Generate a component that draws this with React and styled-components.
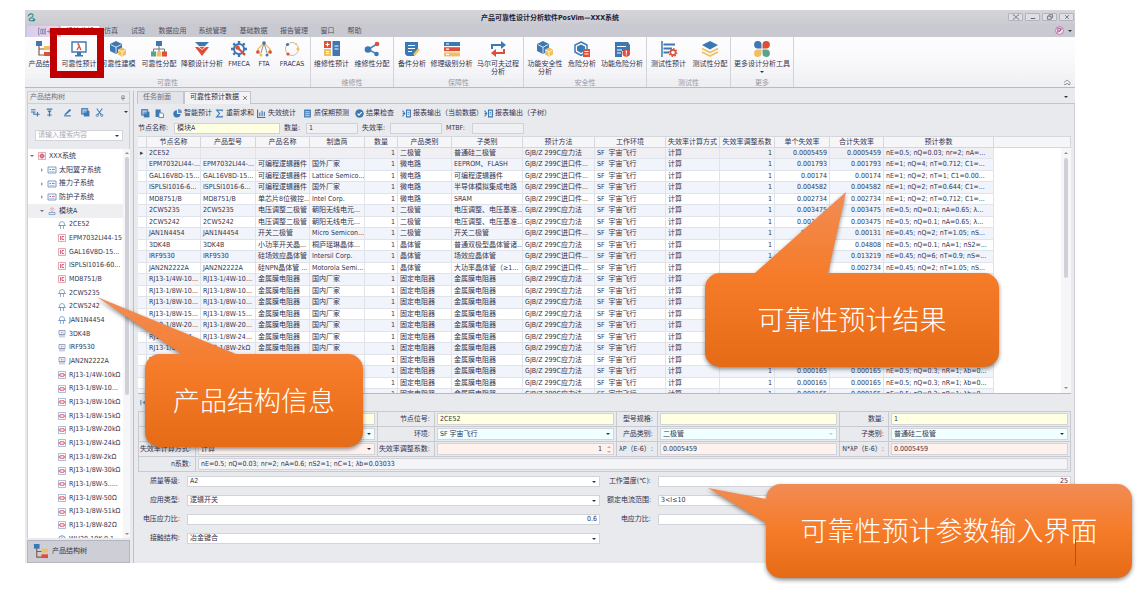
import React, { useState } from 'react';
import styled, { createGlobalStyle, css } from 'styled-components';

const GlobalStyle = createGlobalStyle`
  * {
    box-sizing: border-box;
  }

  body {
    margin: 0;
    background: #fff;
    color: #33334d;
    font-family: 'DejaVu Sans Condensed', 'Noto Sans', 'Noto Sans CJK SC', sans-serif;
    font-size: 7px;
    line-height: 11px;
  }

  button, input, select {
    margin: 0;
    padding: 0;
    border: 0;
    border-radius: 0;
    background: none;
    color: inherit;
    font: inherit;
    outline: none;
  }

  ul {
    margin: 0;
    padding: 0;
    list-style: none;
  }
`;

const Stage = styled.div`
  position: relative;
  padding: 10px 63px 36px 25px;
`;

const AppWindow = styled.div`
  background: #e9eaee;
`;

/* ---------- title and menu ---------- */

const TitleBar = styled.header`
  display: flex;
  align-items: center;
  height: 14px;
  padding: 0 1px 0 2px;
  background: linear-gradient(#d6d6da, #cbcbd2);
`;

const TitleText = styled.h1`
  flex: 1;
  margin: 0;
  padding: 2px 0 0 56px;
  color: #1d1d33;
  font-size: 7px;
  font-weight: 700;
  text-align: center;
`;

const WindowButtons = styled.div`
  display: flex;
  gap: 2px;
`;

const WindowButton = styled.button`
  display: flex;
  align-items: center;
  justify-content: center;
  width: 15px;
  height: 8px;
  border: 1px solid #b4b4be;
  border-radius: 1px;
  background: #dfdfe4;
`;

const MenuBar = styled.nav`
  display: flex;
  align-items: flex-end;
  height: 13px;
  padding-left: 2px;
  background: #c9c9d1;
`;

const FileButton = styled.button`
  display: flex;
  align-items: center;
  justify-content: center;
  width: 31px;
  height: 11px;
  margin-right: 3px;
  background: linear-gradient(90deg, #d9cdee, #ecd4ec);
`;

const MenuItem = styled.a`
  flex: none;
  width: ${props => props.$width}px;
  height: 11px;
  background: ${props => (props.$active ? '#fcfcfe' : 'transparent')};
  color: #50505f;
  text-align: center;
  text-decoration: none;
  white-space: nowrap;
`;

const MenuEnd = styled.div`
  display: flex;
  align-items: center;
  gap: 4px;
  height: 13px;
  margin-left: auto;
  padding-right: 3px;
`;

/* ---------- ribbon ---------- */

const Ribbon = styled.section`
  display: flex;
  height: 51px;
  border-bottom: 1px solid #b9bac1;
  background: linear-gradient(#fdfdfe, #fafafc 40%, #eeeff3);
`;

const RibbonGroup = styled.div`
  display: flex;
  flex: none;
  flex-direction: column;
  justify-content: space-between;
  width: ${props => props.$width}px;
  border-right: 1px solid #d2d3d9;
`;

const RibbonItems = styled.div`
  display: flex;
  padding-top: 4px;
`;

const RibbonButton = styled.button`
  display: flex;
  flex: none;
  flex-direction: column;
  align-items: center;
  gap: 3px;
  width: ${props => props.$width}px;
  line-height: 8px;
  white-space: pre;
  cursor: pointer;
`;

const GroupTitle = styled.div`
  height: 8px;
  background: rgba(236, 237, 241, 0.6);
  color: #9a9aa4;
  line-height: 8px;
  text-align: center;
`;

const RibbonEnd = styled.div`
  display: flex;
  flex: 1;
  align-items: flex-end;
  justify-content: flex-end;
  padding: 0 4px 1px 0;
`;

const Caret = styled.span`
  flex: none;
  width: 0;
  height: 0;
  border: 2px solid transparent;
  border-top-color: ${props => props.$color || '#33333f'};
  border-bottom: 0;
`;

const UpCaret = styled.span`
  flex: none;
  width: 0;
  height: 0;
  border: 2px solid transparent;
  border-top: 0;
  border-bottom-color: ${props => props.$color || '#8c8c98'};
`;

/* ---------- side panel ---------- */

const Workspace = styled.div`
  display: flex;
  padding-top: 3px;
`;

const SidePanel = styled.aside`
  display: flex;
  flex: none;
  flex-direction: column;
  width: 109px;
  padding: 0 3px 0 2px;
  border-right: 1px solid #bfc0c9;
`;

const SideHeader = styled.div`
  display: flex;
  align-items: center;
  justify-content: space-between;
  height: 13px;
  padding: 0 3px 0 2px;
  border: 1px solid #cfd0d6;
  color: #70707e;
`;

const SideTools = styled.div`
  display: flex;
  align-items: center;
  gap: 5px;
  height: 18px;
  padding: 0 1px 2px 3px;
  border: solid #cfd0d6;
  border-width: 0 1px;
`;

const ToolButton = styled.button`
  display: flex;
  align-items: center;
  gap: 2px;
  margin-left: ${props => props.$gap || 0}px;
  white-space: nowrap;
  cursor: pointer;
`;

const SearchArea = styled.div`
  display: flex;
  height: 27px;
  padding: 8px 6px 8px 7px;
  border: solid #cfd0d6;
  border-width: 0 1px;
`;

const SearchBox = styled.div`
  display: flex;
  flex: 1;
  align-items: center;
  padding: 0 3px 0 2px;
  border: 1px solid #d2d4da;
  background: #fff;
`;

const SearchInput = styled.input`
  flex: 1;
  width: 0;
  height: 9px;

  &::placeholder {
    color: #a9a9b2;
  }
`;

const TreeArea = styled.div`
  display: flex;
  flex: 1 1 0px;
  min-height: 0;
  overflow: hidden;
  border-left: 1px solid #cfd0d6;
  background: #fff;
`;

const Tree = styled.ul`
  flex: 1;
  width: 0;
`;

const TreeRow = styled.li`
  display: flex;
  align-items: center;
  gap: 3px;
  height: 14px;
  padding-left: ${props => props.$level * 10 + 2}px;
  background: ${props => (props.$selected ? '#efeff2' : 'transparent')};
  white-space: nowrap;

  &:nth-child(3n) {
    height: 13px;
  }
`;

const Expander = styled.span`
  flex: none;
  width: 4px;
  height: 4px;
  margin-right: 1px;
  border: 2px solid transparent;
  ${props => props.$state === 'open' && css`
    border-top-color: #6f6f7c;
    transform: translateY(1px);
  `}
  ${props => props.$state === 'closed' && css`
    border-left-color: #9a9aa5;
    transform: translateX(1px);
  `}
`;

const TreeScroll = styled.div`
  display: flex;
  flex: none;
  flex-direction: column;
  align-items: center;
  gap: 3px;
  width: 7px;
  padding: 3px 0 3px;
  background: #f6f6f9;
`;

const Thumb = styled.div`
  flex: none;
  width: 4px;
  height: ${props => props.$size}px;
  margin-bottom: auto;
  border-radius: 2px;
  background: #cfd0d8;
`;

const SideFooter = styled.button`
  display: flex;
  align-items: center;
  gap: 4px;
  height: 23px;
  margin-top: 2px;
  padding: 0 5px;
  border: 1px solid #b5b6bf;
  background: #cdced6;
`;

/* ---------- main area ---------- */

const Main = styled.main`
  flex: 1;
  min-width: 0;
  padding-left: 3px;
`;

const DocTabs = styled.div`
  display: flex;
  align-items: center;
  height: 13px;
  border-bottom: 1px solid #c4c5cc;
`;

const DocTab = styled.button`
  display: flex;
  align-items: center;
  gap: 3px;
  height: 13px;
  padding: 0 ${props => (props.$active ? 2 : 12)}px 0 5px;
  border: solid #c4c5cc;
  border-width: 1px 1px 0;
  background: ${props => (props.$active ? '#f3f3f6' : '#e3e4e9')};
  color: ${props => (props.$active ? '#2a2a44' : '#6c6c7a')};
`;

const BarEnd = styled.span`
  display: flex;
  margin-left: auto;
  padding-right: ${props => props.$inset || 0}px;
`;

const MainBody = styled.div`
  padding: 0 3px 0 1px;
  border-right: 1px solid #cccdd5;
`;

const Toolbar = styled.div`
  display: flex;
  align-items: center;
  height: 18px;
  padding-left: 3px;
`;

const FilterBar = styled.div`
  display: flex;
  align-items: center;
  gap: 4px;
  height: 14px;
  padding-bottom: 2px;
`;

const FilterLabel = styled.label`
  flex: none;
  min-width: ${props => props.$width}px;
`;

const FilterInput = styled.input`
  width: ${props => props.$width}px;
  height: 11px;
  padding: 0 2px;
  border: 1px solid #d0d1d8;
  background: ${props => (props.$yellow ? '#ffffe1' : '#eff0f3')};
`;

const GridFrame = styled.div`
  position: relative;
  height: 258px;
  overflow: hidden;
  border-bottom: 1px solid #b6b9c8;
  background: #fff;
`;

const DataTable = styled.table`
  width: 100%;
  border-collapse: separate;
  border-spacing: 0;
  table-layout: fixed;
`;

const Th = styled.th`
  height: 12px;
  padding: 0;
  overflow: hidden;
  border: solid #d6d7dd;
  border-width: 1px 1px 1px 0;
  background: #f6f6f9;
  font-weight: 400;
  line-height: 10px;
  white-space: nowrap;
`;

const Tr = styled.tr`
  background: #fff;
  line-height: 10px;

  &:nth-child(even) {
    background: #f1f4fa;
    line-height: 11px;
  }

  &:first-child {
    background: #f0f0f4;
  }
`;

const Td = styled.td`
  padding: 0 ${props => (props.$right ? 2 : 0)}px 0 2px;
  overflow: hidden;
  border: solid #e0e3ea;
  border-width: 0 1px 1px 0;
  text-align: ${props => (props.$right ? 'right' : 'left')};
  white-space: nowrap;
`;

const FillTd = styled.td`
  padding: 0;
  background: #fff;
`;

const GridScroll = styled.div`
  position: absolute;
  top: 12px;
  right: 0;
  bottom: 0;
  display: flex;
  flex-direction: column;
  align-items: center;
  gap: 4px;
  width: 10px;
  padding: 4px 0;
  background: #f6f6f9;
`;

const Navigator = styled.div`
  display: flex;
  align-items: center;
  height: 17px;
  padding-left: 2px;
`;

const Form = styled.form`
  display: grid;
  grid-template-columns: 57px 1fr 57px 1fr 41px 1fr 49px 1fr;
  border: solid #c9cad1;
  border-width: 1px 0 0 1px;
`;

const FormLabel = styled.label`
  height: 15px;
  padding-right: 4px;
  border: solid #c9cad1;
  border-width: 0 1px 1px 0;
  line-height: 14px;
  text-align: right;
  white-space: nowrap;
`;

const FormCell = styled.div`
  display: flex;
  grid-column: span ${props => props.$span || 1};
  min-width: 0;
  padding: 1px 2px;
  border: solid #c9cad1;
  border-width: 0 1px 1px 0;
`;

const tones = {
  yellow: '#ffffe1',
  cyan: '#f0ffff',
  pink: '#fff1ec',
  grey: '#f4f4f6',
  white: '#fff',
};

const Field = styled.div`
  display: flex;
  flex: 1;
  align-items: center;
  min-width: 0;
  height: ${props => (props.$tone === 'white' ? 11 : 12)}px;
  padding-right: ${props => (props.$right ? 0 : 3)}px;
  border: 1px solid #d3d4da;
  background: ${props => tones[props.$tone]};

  input, select {
    flex: 1;
    width: 0;
    height: 9px;
    padding: 0 2px;
    line-height: 9px;
    text-align: ${props => (props.$right ? 'right' : 'left')};
    appearance: none;
  }

  select:disabled {
    opacity: 1;
  }
`;

const Spinner = styled.span`
  display: flex;
  flex-direction: column;
  gap: 3px;
  padding: 0 2px 0 3px;
`;

const Params = styled.form`
  display: grid;
  grid-template-columns: 42px 1fr 44px 1fr;
  gap: 8px 7px;
  padding: 4px 0 19px;
`;

const ParamLabel = styled.label`
  text-align: right;
  white-space: nowrap;
`;

/* ---------- annotations ---------- */

const Highlight = styled.div`
  position: absolute;
  top: 28px;
  left: 50px;
  width: 54px;
  height: 50px;
  border: 7px solid #c00000;
`;

const Callout = styled.div`
  position: absolute;
  top: ${props => props.$y}px;
  left: ${props => props.$x}px;
  display: flex;
  align-items: center;
  justify-content: center;
  width: ${props => props.$w}px;
  height: ${props => props.$h}px;
  padding-bottom: 2px;
  color: #fff;
  font-family: 'Noto Sans CJK SC', sans-serif;
  font-size: 27px;
  font-weight: 300;
  line-height: 40px;
  white-space: nowrap;

  svg {
    position: absolute;
    top: 0;
    left: 0;
    overflow: visible;
    filter: drop-shadow(0 2px 2px rgba(60, 60, 60, 0.6));
  }

  span {
    position: relative;
  }
`;

const TextCursor = styled.span`
  position: absolute;
  top: 539px;
  left: 1075px;
  width: 1px;
  height: 27px;
  background: #4a6f93;
`;

const BLUE = '#3c78b4';
const RED = '#dc4f38';
const SAND = '#f0c060';
const GREEN = '#58a58c';

const art = {
  structure: <><path d="M4 3v11h6M4 8h7" fill="none" stroke="#8a5a3c" strokeWidth="1.2" /><path fill={BLUE} d="M1 0h6v5H1z" /><path fill={SAND} d="M9 5h7v4H9z" /><path fill={RED} d="M9 11h7v4H9z" /></>,
  predict: <><path fill="#fff" stroke={BLUE} strokeWidth="1.4" d="M1 1h14v10H1z" /><path fill={BLUE} d="M6 11h4v3H6zM4 14h8v1.4H4z" /><path d="M6.3 3h1.2l2.3 6M8 5.5L6 9" fill="none" stroke={RED} strokeWidth="1.3" /></>,
  cubes: <><path fill={BLUE} d="M6 0l6 3v7l-6 3-6-3V3z" /><path d="M.8 3.6L6 6.2l5.2-2.6M6 6v6.5" fill="none" stroke="#fff" strokeWidth=".8" /><path fill={SAND} d="M12 6.5l4 2v5l-4 2.3-4-2.3v-5z" /><path d="M8.5 9l3.5 1.8L15.5 9M12 11v4.3" fill="none" stroke="#fff" strokeWidth=".7" /></>,
  allocate: <><path d="M8 5v3M2.5 11V8h11v3M8 8v3" fill="none" stroke="#777" strokeWidth="1" /><path fill={BLUE} d="M5 0h6v5H5z" /><path fill={GREEN} d="M0 10.5h5v5H0z" /><path fill={SAND} d="M5.7 10.5h4.6v5H5.7z" /><path fill={RED} d="M11 10.5h5v5h-5z" /></>,
  derate: <><path fill={BLUE} d="M1 1h14l-4 4H5z" /><path fill={RED} d="M1 6h3l4 3 4-3h3l-7 9z" /><path fill={RED} d="M5 5.800h6L8 8.200z" /></>,
  gear: <><circle cx="8" cy="8" r="5" fill="none" stroke={BLUE} strokeWidth="2" /><path d="M8 0v3M8 13v3M0 8h3M13 8h3M2.300 2.300l2.200 2.200M11.500 11.500l2.200 2.200M2.300 13.700l2.200-2.200M11.500 4.500l2.200-2.200" stroke={BLUE} strokeWidth="2.400" /><path d="M6 6l8 8" stroke={RED} strokeWidth="2.200" /><circle cx="6.500" cy="6.500" r="2.200" fill={RED} /></>,
  fta: <><path d="M8 2L2 8l2 5M8 2l6 6-2 5M2 8l-1 5M14 8l1 5" fill="none" stroke={SAND} strokeWidth="1.200" /><path d="M8 2L5 12M8 2l3 10" fill="none" stroke="#777" strokeWidth=".8" /><circle cx="8" cy="2" r="1.800" fill={BLUE} /><circle cx="1.800" cy="11" r="1.700" fill={RED} /><circle cx="5" cy="14" r="1.500" fill={SAND} /><circle cx="11" cy="14" r="1.500" fill={BLUE} /><circle cx="14.200" cy="11" r="1.700" fill={RED} /></>,
  fracas: <><circle cx="8" cy="8" r="6.5" fill="none" stroke="#d9b899" strokeWidth="1" /><circle cx="3.5" cy="3.5" r="1.600" fill={BLUE} /><circle cx="14" cy="8" r="1.600" fill={SAND} /><circle cx="4" cy="13" r="1.600" fill={RED} /><circle cx="12" cy="3" r="1.100" fill={SAND} /></>,
  repair: <><path fill={RED} d="M0 0h7v7H0z" /><path d="M3.5 1.5v4M1.5 3.5h4" stroke="#fff" strokeWidth="1.200" /><path fill={SAND} d="M0 8h7v7H0z" /><path fill={BLUE} d="M8.5 0H16v15H8.5z" /><path d="M2 10.5h3M2 12.5h3M10.5 5h4M10.5 8h4" stroke="#fff" strokeWidth="1" /></>,
  share: <><path d="M13 3L4 8.5l8 4" fill="none" stroke="#4e84bb" strokeWidth="1.500" /><circle cx="4" cy="8.500" r="3.300" fill={BLUE} /><circle cx="13" cy="3" r="2.300" fill={RED} /><circle cx="12.500" cy="13" r="2.300" fill={BLUE} /></>,
  note: <><path fill={BLUE} d="M1 1h13v9l-4 5H3l-2-2z" /><path d="M4 4.5h7M4 7.5h7M4 10.5h4" stroke="#fff" strokeWidth="1.200" /><path d="M15 8l-5 6" stroke={SAND} strokeWidth="2.400" /></>,
  levels: <><path fill={BLUE} d="M0 1h16v4H0z" /><path fill={RED} d="M0 6.2h16v4H0z" /><path fill={SAND} d="M0 11.400h16v4H0z" /><path d="M2 3h3M2 8.2h3M2 13.4h3" stroke="#fff" strokeWidth="1.200" /></>,
  loop: <><path d="M2 8V4h10" fill="none" stroke={BLUE} strokeWidth="2" /><path fill={BLUE} d="M11 0l5 4-5 4z" /><path d="M14 8v4H5" fill="none" stroke={RED} strokeWidth="2" /><path fill={RED} d="M6 8l-5 4 5 4z" /></>,
  hazard: <><path fill="none" stroke={BLUE} strokeWidth="1.500" d="M7 1l6 3v7l-6 3.500L1 11V4z" /><path fill={BLUE} d="M7 3.500l4 2v4l-4 2.500-4-2.500v-4z" /><path fill={RED} d="M9 8h7v8H9z" /><path d="M10.500 10.500h4M10.500 13h4" stroke="#fff" strokeWidth="1" /></>,
  funcHazard: <><path fill={BLUE} d="M1 1h13l2 3v6H8v6H1z" /><path d="M3 5.500h9M3 9h5M3 12h4" stroke="#fff" strokeWidth="1.200" /><circle cx="12.300" cy="12" r="3.800" fill={RED} /><path d="M12.300 9.500v3M12.300 13.300v1" stroke="#fff" strokeWidth="1.200" /></>,
  testPredict: <><path d="M1 0v16" stroke={BLUE} strokeWidth="1.500" /><path d="M2.500 3.500H14M2.500 7.500H11M2.500 11.500H8" stroke={BLUE} strokeWidth="2.200" /><circle cx="12" cy="11.500" r="2.600" fill="#fff" stroke={RED} strokeWidth="1.600" /><circle cx="12" cy="11.500" r="3.900" fill="none" stroke={RED} strokeWidth="1.200" strokeDasharray="1.500 1.500" /></>,
  layers: <><path fill={BLUE} d="M8 0l8 4-8 4.500L0 4z" /><path d="M0 7.500l8 4 8-4M0 11l8 4 8-4" fill="none" stroke={SAND} strokeWidth="1.700" /></>,
  petals: <><path fill={BLUE} d="M7.500 7.500H4A3.700 3.700 0 1 1 7.500 4z" /><path fill={RED} d="M8.500 7.500V4A3.700 3.700 0 1 1 12 7.500z" /><path fill={SAND} d="M7.500 8.500V12A3.700 3.700 0 1 1 4 8.500z" /><path fill={GREEN} d="M8.500 8.500H12A3.700 3.700 0 1 1 8.500 12z" /></>,
  addRow: <path d="M0 3h8M0 7h8M11.500 7v8M8 11h7.500M5 7v4h3" fill="none" stroke={BLUE} strokeWidth="2" />,
  addChild: <><path d="M3 2h10M8 4v11M4 12.500h8" stroke={BLUE} strokeWidth="2" /><path fill={BLUE} d="M4 5h8l-4 4z" /></>,
  edit: <><path d="M2 14h12" stroke={BLUE} strokeWidth="2" /><path d="M12 2l-8 8-1 2 3-1 8-7z" fill={BLUE} stroke={BLUE} /></>,
  copy: <><path fill="#7fa6cf" stroke={BLUE} strokeWidth="1.500" d="M1 1h11v10H1z" /><path fill={BLUE} d="M5 5h10v10H5z" /><path d="M3 4h7M3 7h7" stroke="#fff" /></>,
  paste: <><path fill={BLUE} d="M1 1h9v5H7v8H1z" /><path fill="#fff" stroke={BLUE} strokeWidth="1.500" d="M7 7h6l2 2v6H7z" /></>,
  cut: <><path d="M3 1l8 11M13 1L5 12" stroke={BLUE} strokeWidth="1.800" /><circle cx="4" cy="13" r="2" fill="none" stroke={BLUE} strokeWidth="1.500" /><circle cx="12" cy="13" r="2" fill="none" stroke={BLUE} strokeWidth="1.500" /></>,
  smart: <><path fill={BLUE} d="M7 2a6.500 6.500 0 1 0 6.500 7H7z" /><path fill="#5f95cc" d="M9 0a7 7 0 0 1 7 7H9z" /></>,
  sigma: <path d="M13 4V2H3l5 6-5 6h10v-2" fill="none" stroke={BLUE} strokeWidth="2" />,
  bars: <path d="M1 1v14h14M5 13V6M9 13V3M13 13V5" fill="none" stroke={BLUE} strokeWidth="2" />,
  sheet: <><path fill={BLUE} d="M2 1h12v14H2z" /><path d="M4 5h8M4 8.500h8M4 12h8" stroke="#fff" strokeWidth="1.400" /></>,
  check: <><circle cx="8" cy="8" r="7.500" fill={BLUE} /><path d="M4.500 8l2.500 3 5-5.500" fill="none" stroke="#fff" strokeWidth="2" /></>,
  report: <><path d="M1 3l4 5-4 5M5 8H1" fill="none" stroke={BLUE} strokeWidth="1.800" /><path d="M8 2h7v12H8z" fill="none" stroke={BLUE} strokeWidth="1.800" /><path d="M10 6h3M10 9h3" stroke={BLUE} strokeWidth="1.400" /></>,
  system: <><path fill="#fdf0f3" stroke="#d77" strokeWidth="1.200" d="M1 1h14v14H1z" /><path fill="none" stroke="#c8416a" strokeWidth="1.400" d="M8 2v12M2 8h12M5 5h6v6H5z" /></>,
  subsystem: <><path fill="#f6fafe" stroke="#5f8bc0" strokeWidth="1.600" d="M0 2h16v12H0z" /><path d="M3 7h3M8 7h5" stroke="#b8557e" strokeWidth="1.800" /><path d="M3 11h10" stroke="#9cb8d8" strokeWidth="1.400" /></>,
  module: <><path d="M2 11h12v4H2zM8 11V8" fill="none" stroke="#6c94c4" strokeWidth="1.500" /><path d="M4 5c2-4 7-4 9 0M6 7c1-2 4-2 5 0" fill="none" stroke="#d57c8e" strokeWidth="1.400" /></>,
  diode: <path d="M3 9V6a5 5 0 0 1 10 0v3zM0 9h16M5 9v7M11 9v7" fill="none" stroke="#6c94c4" strokeWidth="1.500" />,
  chip: <><path fill="#fff5f6" stroke="#cf7f92" strokeWidth="1.300" d="M1 1h14v14H1z" /><path d="M5 4v8M12 5H8v6h4" fill="none" stroke="#cc3a5e" strokeWidth="1.500" /></>,
  transistor: <><path d="M2 1h12v8H2zM4 9v6M8 9v6M12 9v6" fill="none" stroke="#6c7fae" strokeWidth="1.400" /><path d="M5 4h2v3M10 3v4" fill="none" stroke="#b8557e" strokeWidth="1.200" /></>,
  resistor: <><path fill="#fff" stroke="#7d9ac4" strokeWidth="1.300" d="M1 1h14v14H1z" /><path d="M1 8h3M12 8h3M4 5.500h8v5H4z" fill="none" stroke="#d43e5e" strokeWidth="1.600" /></>,
  pot: <><circle cx="8" cy="8" r="6.500" fill="#fff" stroke={BLUE} strokeWidth="1.500" /><path d="M3 8h10M8 4v8" stroke={BLUE} strokeWidth="1.500" /></>,
  first: <><path d="M2 2v12" stroke="#6f8db4" strokeWidth="2.500" /><path fill="#6f8db4" d="M14 2v12L5 8z" /></>,
  logo: <path d="M2 6c1-5 8-6 9-2s-6 4-7 7 4 4 9 1M10 9l4 3-3 3" fill="none" stroke="#2b8d92" strokeWidth="2" />,
  pin: <path d="M5 2h6v7H5zM3 9h10M8 9v6" fill="none" stroke="#77778a" strokeWidth="1.800" />,
  close: <path d="M3 3l10 10M13 3L3 13" stroke="#5b5b6b" strokeWidth="2" />,
  minimize: <path d="M2 12h12" stroke="#5b5b6b" strokeWidth="2.500" />,
  restore: <path d="M5 5V2h10v8h-4M1 6h10v8H1z" fill="none" stroke="#5b5b6b" strokeWidth="2" />,
  expand: <path d="M2 2l4 4M14 2l-4 4M2 14l4-4M14 14l-4-4M1 5V1M15 5V1M1 11v4M15 11v4M6 6h4v4H6z" fill="none" stroke="#5b5b6b" strokeWidth="1.500" />,
  skin: <><circle cx="8" cy="8" r="7" fill="#f7e6f1" stroke="#b36a9c" strokeWidth="1.500" /><path d="M5 12V4h4l2 2-2 3H6M11 4l-3 6" fill="none" stroke="#8a3f78" strokeWidth="1.500" /></>,
  collapse: <path d="M2 9l6-5 6 5M2 13h4l2-3 2 3h4V9" fill="none" stroke="#7b7b88" strokeWidth="1.500" />,
  fileMenu: <path d="M3 2H1v12h2M5 4h6v8H5zM8 4v8M13 2v12M16 8h8M20 4v8" fill="none" stroke="#8080a0" strokeWidth="1.500" />,
};

const Icon = ({ name, size = 8 }) => (
  <svg width={size} height={size} viewBox="0 0 16 16" overflow="visible" aria-hidden="true">
    {art[name]}
  </svg>
);

const menus = [
  ['仿真', 24], ['试验', 30], ['数据应用', 39], ['系统管理', 41],
  ['基础数据', 41], ['报告管理', 40], ['窗口', 27], ['帮助', 27],
];

const ribbon = [
  { title: '可靠性', width: 286, items: [
    ['structure', '产品结构', 35], ['predict', '可靠性预计', 38], ['cubes', '可靠性建模', 40],
    ['allocate', '可靠性分配', 42], ['derate', '降额设计分析', 44], ['gear', 'FMECA', 30],
    ['fta', 'FTA', 20], ['fracas', 'FRACAS', 36],
  ] },
  { title: '维修性', width: 83, items: [['repair', '维修性预计', 41], ['share', '维修性分配', 40]] },
  { title: '保障性', width: 130, items: [['note', '备件分析', 36], ['levels', '修理级别分析', 43], ['loop', '马尔可夫过程\n分析', 50]] },
  { title: '安全性', width: 123, items: [['cubes', '功能安全性\n分析', 42], ['hazard', '危险分析', 32], ['funcHazard', '功能危险分析', 48]] },
  { title: '测试性', width: 84, items: [['testPredict', '测试性预计', 43], ['layers', '测试性分配', 40]] },
  { title: '更多', width: 63, items: [['petals', '更多设计分析工具', 62]] },
];

const treeItems = [
  [0, 'system', 'XXX系统', 'open'],
  [1, 'subsystem', '太阳翼子系统', 'closed'],
  [1, 'subsystem', '推力子系统', 'closed'],
  [1, 'subsystem', '防护子系统', 'closed'],
  [1, 'module', '模块A', 'open'],
  [2, 'diode', '2CE52'],
  [2, 'chip', 'EPM7032LI44-15'],
  [2, 'chip', 'GAL16V8D-15...'],
  [2, 'chip', 'ISPLSI1016-60...'],
  [2, 'chip', 'MD8751/B'],
  [2, 'diode', '2CW5235'],
  [2, 'diode', '2CW5242'],
  [2, 'diode', 'JAN1N4454'],
  [2, 'transistor', '3DK4B'],
  [2, 'transistor', 'IRF9530'],
  [2, 'transistor', 'JAN2N2222A'],
  [2, 'resistor', 'RJ13-1/4W-10kΩ'],
  [2, 'resistor', 'RJ13-1/8W-10...'],
  [2, 'resistor', 'RJ13-1/8W-10kΩ'],
  [2, 'resistor', 'RJ13-1/8W-15kΩ'],
  [2, 'resistor', 'RJ13-1/8W-20kΩ'],
  [2, 'resistor', 'RJ13-1/8W-24kΩ'],
  [2, 'resistor', 'RJ13-1/8W-2kΩ'],
  [2, 'resistor', 'RJ13-1/8W-30kΩ'],
  [2, 'resistor', 'RJ13-1/8W-5.....'],
  [2, 'resistor', 'RJ13-1/8W-50Ω'],
  [2, 'resistor', 'RJ13-1/8W-51kΩ'],
  [2, 'resistor', 'RJ13-1/8W-82Ω'],
  [2, 'pot', 'WH20-10K-0.1...'],
];

const tools = [
  ['copy', '', 0], ['paste', '', 5], ['smart', '智能预计', 9], ['sigma', '重新求和', 3],
  ['bars', '失效统计', 3], ['sheet', '质保期预测', 7], ['check', '结果检查', 6],
  ['report', '报表输出（当前数据）', 8], ['report', '报表输出（子树）', 1],
];

const columns = [
  ['', 9], ['节点名称', 54], ['产品型号', 55], ['产品名称', 54], ['制造商', 55], ['数量', 33],
  ['产品类别', 54], ['子类别', 71], ['预计方法', 72], ['工作环境', 71], ['失效率计算方式', 54],
  ['失效率调整系数', 55], ['单个失效率', 55], ['合计失效率', 54], ['预计参数', 110],
];

const stress = 'GJB/Z 299C应力法';
const imported = 'GJB/Z 299C进口件...';

const resistor = name => [name, name, '金属膜电阻器', '国内厂家', '固定电阻器', '金属膜电阻器', stress, '0.000165', 'nE=0.5; nQ=0.3; nR=1; λb=0...'];

const rows = [
  ['2CE52', '', '', '', '二极管', '普通硅二极管', stress, '0.0005459', 'nE=0.5; nQ=0.03; nr=2; nA=...'],
  ['EPM7032LI44-...', 'EPM7032LI44-...', '可编程逻辑器件', '国外厂家', '微电路', 'EEPROM、FLASH', imported, '0.001793', 'nE=1; nQ=4; nT=0.712; C1=...'],
  ['GAL16V8D-15...', 'GAL16V8D-15...', '可编程逻辑器件', 'Lattice Semico...', '微电路', '可编程逻辑器件', imported, '0.00174', 'nE=1; nQ=2; nT=1; C1=0.00...'],
  ['ISPLSI1016-6...', 'ISPLSI1016-6...', '可编程逻辑器件', '国外厂家', '微电路', '半导体模拟集成电路', imported, '0.004582', 'nE=1; nQ=2; nT=0.644; C1=...'],
  ['MD8751/B', 'MD8751/B', '单芯片8位微控...', 'Intel Corp.', '微电路', 'SRAM', imported, '0.002734', 'nE=1; nQ=2; nT=0.712; C1=...'],
  ['2CW5235', '2CW5235', '电压调整二极管', '朝阳无线电元...', '二极管', '电压调整、电压基准...', stress, '0.003475', 'nE=0.5; nQ=0.1; nA=0.65; λ...'],
  ['2CW5242', '2CW5242', '电压调整二极管', '朝阳无线电元...', '二极管', '电压调整、电压基准...', stress, '0.003475', 'nE=0.5; nQ=0.1; nA=0.65; λ...'],
  ['JAN1N4454', 'JAN1N4454', '开关二极管', 'Micro Semicon...', '二极管', '开关二极管', imported, '0.00131', 'nE=0.45; nQ=2; nT=1.05; nS...'],
  ['3DK4B', '3DK4B', '小功率开关晶...', '桐庐瑶琳晶体...', '晶体管', '普通双极型晶体管诸...', stress, '0.04808', 'nE=0.5; nQ=0.1; nA=1; nS2=...'],
  ['IRF9530', 'IRF9530', '硅场效应晶体管', 'Intersil Corp.', '晶体管', '场效应晶体管', imported, '0.013219', 'nE=0.45; nQ=6; nT=0.9; nS=...'],
  ['JAN2N2222A', 'JAN2N2222A', '硅NPN晶体管 ...', 'Motorola Semi...', '晶体管', '大功率晶体管（≥1...', imported, '0.002734', 'nE=0.45; nQ=2; nT=1.05; nS...'],
  resistor('RJ13-1/4W-10...'),
  resistor('RJ13-1/8W-10...'),
  resistor('RJ13-1/8W-10...'),
  resistor('RJ13-1/8W-15...'),
  resistor('RJ13-1/8W-20...'),
  resistor('RJ13-1/8W-24...'),
  resistor('RJ13-1/8W-2kΩ'),
  resistor('RJ13-1/8W-30...'),
  resistor('RJ13-1/8W-5....'),
  resistor('RJ13-1/8W-50Ω'),
  resistor('RJ13-1/8W-51...'),
];

const formFields = [
  ['节点名称:', '模块A', 'yellow'],
  ['节点位号:', '2CE52', 'yellow'],
  ['型号规格:', '', 'yellow'],
  ['数量:', '1', 'yellow'],
  ['预计方法:', stress, 'cyan', 'select'],
  ['环境:', 'SF 宇宙飞行', 'cyan', 'select'],
  ['产品类别:', '二极管', 'cyan', 'locked'],
  ['子类别:', '普通硅二极管', 'cyan', 'select'],
  ['失效率计算方式:', '计算', 'pink', 'select'],
  ['失效率调整系数:', '1', 'pink', 'spin'],
  ['λP（E-6）:', '0.0005459', 'pink'],
  ['N*λP（E-6）:', '0.0005459', 'pink'],
  ['n系数:', 'nE=0.5; nQ=0.03; nr=2; nA=0.6; nS2=1; nC=1; λb=0.03033', 'grey', 'wide'],
];

const paramFields = [
  ['质量等级:', 'A2', 'white', 'select'],
  ['工作温度(℃):', '25', 'white', 'right'],
  ['应用类型:', '逻辑开关', 'white', 'select'],
  ['额定电流范围:', '3<I≤10', 'white', 'select'],
  ['电压应力比:', '0.6', 'white', 'right'],
  ['电应力比:', '0.5', 'white', 'right'],
  ['接触结构:', '冶金键合', 'white', 'select'],
];

const callouts = [
  {
    text: '产品结构信息', x: 145, y: 354, w: 218, h: 93,
    path: 'M15 0H37L-48 -57L91 0H203A15 15 0 0 1 218 15V78A15 15 0 0 1 203 93H15A15 15 0 0 1 0 78V15A15 15 0 0 1 15 0Z',
  },
  {
    text: '可靠性预计结果', x: 705, y: 273, w: 294, h: 94,
    path: 'M15 0H50L141 -81L123 0H279A15 15 0 0 1 294 15V79A15 15 0 0 1 279 94H15A15 15 0 0 1 0 79V15A15 15 0 0 1 15 0Z',
  },
  {
    text: '可靠性预计参数输入界面', x: 766, y: 484, w: 366, h: 94,
    path: 'M15 0H351A15 15 0 0 1 366 15V79A15 15 0 0 1 351 94H15A15 15 0 0 1 0 79V39L-58 4L0 15A15 15 0 0 1 15 0Z',
  },
];

const Control = ({ id, value, tone, kind }) => {
  const isSelect = kind === 'select' || kind === 'locked';
  return (
    <Field $tone={tone} $right={kind === 'right' || kind === 'spin'}>
      {isSelect ? (
        <>
          <select id={id} defaultValue={value} disabled={kind === 'locked'}>
            <option value={value}>{value}</option>
          </select>
          <Caret $color={kind === 'locked' ? '#c5c9cf' : undefined} />
        </>
      ) : (
        <input id={id} type="text" defaultValue={value} />
      )}
      {kind === 'spin' && (
        <Spinner>
          <UpCaret $color="#d0a9a0" />
          <Caret $color="#d0a9a0" />
        </Spinner>
      )}
    </Field>
  );
};

const RibbonBar = () => (
  <Ribbon>
    {ribbon.map(group => (
      <RibbonGroup key={group.title} $width={group.width}>
        <RibbonItems>
          {group.items.map(([icon, label, width]) => (
            <RibbonButton key={label} $width={width} type="button">
              <Icon name={icon} size={16} />
              {label}
              {icon === 'petals' && <Caret />}
            </RibbonButton>
          ))}
        </RibbonItems>
        <GroupTitle>{group.title}</GroupTitle>
      </RibbonGroup>
    ))}
    <RibbonEnd><Icon name="collapse" /></RibbonEnd>
  </Ribbon>
);

const StructurePanel = () => {
  const [query, setQuery] = useState('');

  return (
    <SidePanel>
      <SideHeader>产品结构树<Icon name="pin" size={6} /></SideHeader>
      <SideTools>
        <ToolButton type="button" aria-label="添加同级"><Icon name="addRow" size={9} /></ToolButton>
        <ToolButton type="button" aria-label="添加子级"><Icon name="addChild" size={9} /></ToolButton>
        <ToolButton type="button" aria-label="编辑" $gap={4}><Icon name="edit" size={9} /></ToolButton>
        <ToolButton type="button" aria-label="复制" $gap={4}><Icon name="copy" size={9} /></ToolButton>
        <ToolButton type="button" aria-label="剪切"><Icon name="cut" size={9} /></ToolButton>
        <BarEnd><Caret /></BarEnd>
      </SideTools>
      <SearchArea>
        <SearchBox>
          <SearchInput
            aria-label="搜索"
            placeholder="请输入搜索内容"
            value={query}
            onChange={e => setQuery(e.target.value)}
          />
          <Caret />
        </SearchBox>
      </SearchArea>
      <TreeArea>
        <Tree>
          {treeItems.map(([level, icon, label, state]) => (
            <TreeRow key={label} $level={level} $selected={label === '模块A'}>
              <Expander $state={state} />
              <Icon name={icon} />
              {label}
            </TreeRow>
          ))}
        </Tree>
        <TreeScroll>
          <UpCaret />
          <Thumb $size={238} />
          <Caret $color="#8c8c98" />
        </TreeScroll>
      </TreeArea>
      <SideFooter type="button"><Icon name="structure" size={15} />产品结构树</SideFooter>
    </SidePanel>
  );
};

const ResultTable = () => (
  <GridFrame>
    <DataTable>
      <colgroup>
        {columns.map(([label, width]) => <col key={label} style={{ width }} />)}
        <col />
      </colgroup>
      <thead>
        <tr>
          {columns.map(([label]) => <Th key={label}>{label}</Th>)}
          <Th />
        </tr>
      </thead>
      <tbody>
        {rows.map(([name, model, title, maker, type, subtype, method, rate, params], i) => (
          <Tr key={i}>
            <Td>{i === 0 ? '▸' : ''}</Td>
            <Td>{name}</Td>
            <Td>{model}</Td>
            <Td>{title}</Td>
            <Td>{maker}</Td>
            <Td $right>1</Td>
            <Td>{type}</Td>
            <Td>{subtype}</Td>
            <Td>{method}</Td>
            <Td>SF&nbsp; 宇宙飞行</Td>
            <Td>计算</Td>
            <Td $right>1</Td>
            <Td $right>{rate}</Td>
            <Td $right>{rate}</Td>
            <Td>{params}</Td>
            <FillTd />
          </Tr>
        ))}
      </tbody>
    </DataTable>
    <GridScroll>
      <UpCaret />
      <Thumb $size={120} />
      <Caret $color="#8c8c98" />
    </GridScroll>
  </GridFrame>
);

const App = () => (
  <>
    <GlobalStyle />
    <Stage>
      <AppWindow>
        <TitleBar>
          <Icon name="logo" size={9} />
          <TitleText>产品可靠性设计分析软件PosVim—XXX系统</TitleText>
          <WindowButtons>
            <WindowButton type="button" aria-label="全屏"><Icon name="expand" size={6} /></WindowButton>
            <WindowButton type="button" aria-label="最小化"><Icon name="minimize" size={6} /></WindowButton>
            <WindowButton type="button" aria-label="还原"><Icon name="restore" size={6} /></WindowButton>
            <WindowButton type="button" aria-label="关闭"><Icon name="close" size={6} /></WindowButton>
          </WindowButtons>
        </TitleBar>
        <MenuBar>
          <FileButton type="button" aria-label="文件"><Icon name="fileMenu" size={9} /></FileButton>
          <MenuItem href="#" $width={38} $active>设计分析</MenuItem>
          {menus.map(([label, width]) => (
            <MenuItem key={label} href="#" $width={width}>{label}</MenuItem>
          ))}
          <MenuEnd><Icon name="skin" size={9} /><Caret /></MenuEnd>
        </MenuBar>
        <RibbonBar />
        <Workspace>
          <StructurePanel />
          <Main>
            <DocTabs>
              <DocTab type="button">任务剖面</DocTab>
              <DocTab type="button" $active>可靠性预计数据<Icon name="close" size={6} /></DocTab>
              <BarEnd $inset={7}><Caret /></BarEnd>
            </DocTabs>
            <MainBody>
              <Toolbar>
                {tools.map(([icon, label, gap], i) => (
                  <ToolButton key={i} type="button" $gap={gap} aria-label={label || icon}>
                    <Icon name={icon} size={9} />{label}
                  </ToolButton>
                ))}
              </Toolbar>
              <FilterBar>
                <FilterLabel htmlFor="filter-name" $width={32}>节点名称:</FilterLabel>
                <FilterInput id="filter-name" $width={106} $yellow defaultValue="模块A" />
                <FilterLabel htmlFor="filter-count" $width={18}>数量:</FilterLabel>
                <FilterInput id="filter-count" $width={52} defaultValue="1" />
                <FilterLabel htmlFor="filter-rate" $width={24}>失效率:</FilterLabel>
                <FilterInput id="filter-rate" $width={52} defaultValue="" />
                <FilterLabel htmlFor="filter-mtbf" $width={22}>MTBF:</FilterLabel>
                <FilterInput id="filter-mtbf" $width={52} defaultValue="" />
              </FilterBar>
              <ResultTable />
              <Navigator><Icon name="first" size={7} /></Navigator>
              <Form>
                {formFields.map(([label, value, tone, kind], i) => (
                  <React.Fragment key={label}>
                    <FormLabel htmlFor={`form-${i}`}>{label}</FormLabel>
                    <FormCell $span={kind === 'wide' ? 7 : 1}>
                      <Control id={`form-${i}`} value={value} tone={tone} kind={kind} />
                    </FormCell>
                  </React.Fragment>
                ))}
              </Form>
              <Params>
                {paramFields.map(([label, value, tone, kind], i) => (
                  <React.Fragment key={label}>
                    <ParamLabel htmlFor={`param-${i}`}>{label}</ParamLabel>
                    <Control id={`param-${i}`} value={value} tone={tone} kind={kind} />
                  </React.Fragment>
                ))}
              </Params>
            </MainBody>
          </Main>
        </Workspace>
      </AppWindow>
      <Highlight />
      {callouts.map(({ text, x, y, w, h, path }, i) => (
        <Callout key={text} $x={x} $y={y} $w={w} $h={h}>
          <svg width={w} height={h} aria-hidden="true">
            <defs>
              <linearGradient id={`orange-${i}`} x1="0" y1="0" x2="0" y2="1">
                <stop offset="0" stopColor="#f18c55" />
                <stop offset="0.5" stopColor="#f67b28" />
                <stop offset="1" stopColor="#e56b17" />
              </linearGradient>
            </defs>
            <path d={path} fill={`url(#orange-${i})`} />
          </svg>
          <span>{text}</span>
        </Callout>
      ))}
      <TextCursor />
    </Stage>
  </>
);

export default App;
